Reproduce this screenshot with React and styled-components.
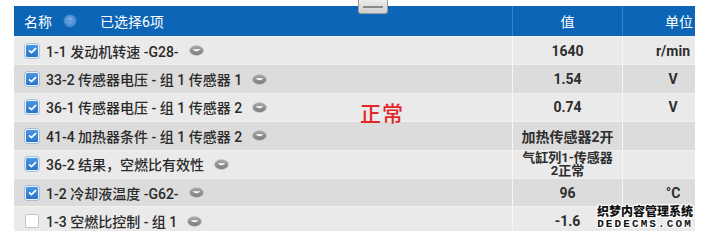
import React from 'react';
import styled, { createGlobalStyle } from 'styled-components';

const GlobalStyle = createGlobalStyle`
  html, body { margin: 0; padding: 0; background: #fff; }
  body { font-family: Roboto, "Noto Sans CJK SC", sans-serif; }
`;

const Page = styled.div`
  position: relative;
  width: 706px;
  height: 239px;
  padding: 6px 0 0 14px;
  box-sizing: border-box;
  overflow: hidden;
`;

const Table = styled.div`
  width: 681px;
  height: 225px;
  overflow: hidden;
`;

const COLS = '498px 110px 101px';

const HeaderRow = styled.div`
  display: grid;
  grid-template-columns: ${COLS};
  width: 709px;
  height: 30px;
  background: #0c65b6;
  color: #fff;
  font-size: 14px;
`;

const HeaderCell = styled.div`
  display: flex;
  align-items: center;
  justify-content: ${p => (p.$center ? 'center' : 'flex-start')};
  padding-left: ${p => p.$pl || 0}px;
  border-left: ${p => (p.$divider ? '1px solid #3b84c9' : 'none')};
`;

const HeaderText = styled.span`
  display: inline-flex;
  margin-left: ${p => p.$ml || 0}px;
`;

const Row = styled.div`
  display: grid;
  grid-template-columns: ${COLS};
  width: 709px;
  height: 28.4px;
  box-sizing: border-box;
  background: ${p => (p.$dark ? '#dcdcdc' : '#eaeaea')};
  border-top: 1px solid #f1f1f1;
  color: #2a2a2a;
`;

const NameCell = styled.div`
  display: flex;
  align-items: center;
  padding-left: 11px;
  font-size: 14px;
  font-weight: 500;
  white-space: nowrap;
`;

const Label = styled.span`
  margin-left: 7px;
  margin-right: 10px;
`;

const ValueCell = styled.div`
  display: flex;
  align-items: center;
  justify-content: center;
  text-align: center;
  font-size: 14px;
  font-weight: 700;
  color: #2e2e2e;
  border-left: 1px solid #f6f6f6;
`;

const TwoLine = styled.span`
  font-size: 13px;
  line-height: 13.5px;
`;

const Box = styled.span`
  width: 14px;
  height: 14px;
  box-sizing: border-box;
  border-radius: 2px;
  flex: none;
  display: inline-flex;
  align-items: center;
  justify-content: center;
  background: ${p => (p.$on ? 'linear-gradient(#4c97e2, #2a74c8)' : '#fff')};
  border: 1px solid ${p => (p.$on ? '#e8f0fa' : '#c4c4c4')};
  box-shadow: ${p => (p.$on ? '0 0 0 0.5px #6c9fd6' : 'none')};
`;

const Handle = styled.div`
  position: absolute;
  left: 358px;
  top: 0;
  width: 30px;
  height: 14px;
  box-sizing: border-box;
  background: linear-gradient(#ececec, #cfcfcf);
  border: 1px solid #9a9a9a;
  border-top: none;
  border-radius: 0 0 3px 3px;
  &::after {
    content: '';
    position: absolute;
    left: 4px;
    right: 4px;
    top: 6px;
    height: 2px;
    background: #8a8a8a;
  }
`;

const Stamp = styled.div`
  position: absolute;
  left: 360px;
  top: 97px;
  font-family: "Noto Sans CJK SC", sans-serif;
  font-size: 21px;
  font-weight: 500;
  color: #e3262a;
  letter-spacing: 1px;
`;

const Watermark = styled.div`
  position: absolute;
  right: 13px;
  top: 203px;
  color: #111;
  font-weight: 700;
  text-align: center;
  text-shadow: 1px 0 #fff, -1px 0 #fff, 0 1px #fff, 0 -1px #fff,
    1px 1px #fff, -1px -1px #fff, 1px -1px #fff, -1px 1px #fff;
`;

const WmTop = styled.div`
  font-family: "Noto Sans CJK SC", sans-serif;
  font-size: 12px;
  font-weight: 900;
  line-height: 15px;
`;

const WmBottom = styled.div`
  font-family: "Liberation Mono", monospace;
  font-size: 11px;
  line-height: 12px;
  letter-spacing: 2.1px;
`;

const Check = ({ on }) => (
  <Box $on={on}>
    {on && (
      <svg width="9" height="7" viewBox="0 0 9 7">
        <path d="M1 3.4 L3.5 5.6 L8 1.2" fill="none" stroke="#fff" strokeWidth="1.7" />
      </svg>
    )}
  </Box>
);

const Drop = () => (
  <svg width="15" height="11" viewBox="0 0 15 11" style={{ flex: 'none' }}>
    <defs>
      <linearGradient id="dg" x1="0" y1="0" x2="0" y2="1">
        <stop offset="0" stopColor="#a8a8a8" />
        <stop offset="1" stopColor="#7c7c7c" />
      </linearGradient>
    </defs>
    <ellipse cx="7.5" cy="5.5" rx="7" ry="5" fill="url(#dg)" stroke="#cfcfcf" strokeWidth="0.6" />
    <path d="M3.6 4.2 Q7.5 8.4 11.4 4.2 Z" fill="#fff" />
  </svg>
);

const Sort = () => (
  <svg width="14" height="14" viewBox="0 0 14 14">
    <defs>
      <radialGradient id="sg" cx="0.5" cy="0.45" r="0.6">
        <stop offset="0" stopColor="#8fbbe9" />
        <stop offset="0.6" stopColor="#4d8fd6" />
        <stop offset="1" stopColor="#2f78c4" />
      </radialGradient>
    </defs>
    <circle cx="7" cy="7" r="6.5" fill="url(#sg)" />
    <rect x="4" y="6.3" width="6" height="1.3" rx="0.6" fill="#3a7fca" opacity="0.7" />
  </svg>
);

const rows = [
  { on: true, label: '1-1 发动机转速 -G28-', value: '1640', unit: 'r/min' },
  { on: true, label: '33-2 传感器电压 - 组 1 传感器 1', value: '1.54', unit: 'V' },
  { on: true, label: '36-1 传感器电压 - 组 1 传感器 2', value: '0.74', unit: 'V' },
  { on: true, label: '41-4 加热器条件 - 组 1 传感器 2', value: '加热传感器2开', unit: '' },
  { on: true, label: '36-2 结果，空燃比有效性', value: ['气缸列1-传感器', '2正常'], unit: '' },
  { on: true, label: '1-2 冷却液温度 -G62-', value: '96', unit: '°C' },
  { on: false, label: '1-3 空燃比控制 - 组 1', value: '-1.6', unit: '' },
];

export default function App() {
  return (
    <>
      <GlobalStyle />
      <Page>
        <Table>
          <HeaderRow>
            <HeaderCell $pl={10}>
              <HeaderText>名称</HeaderText>
              <HeaderText $ml={11}>
                <Sort />
              </HeaderText>
              <HeaderText $ml={23}>已选择6项</HeaderText>
            </HeaderCell>
            <HeaderCell $center $divider>值</HeaderCell>
            <HeaderCell $center $divider $pl={12}>单位</HeaderCell>
          </HeaderRow>
          {rows.map((r, i) => (
            <Row key={i} $dark={i % 2 === 1}>
              <NameCell>
                <Check on={r.on} />
                <Label>{r.label}</Label>
                <Drop />
              </NameCell>
              <ValueCell>
                {Array.isArray(r.value) ? (
                  <TwoLine>
                    {r.value[0]}
                    <br />
                    {r.value[1]}
                  </TwoLine>
                ) : (
                  r.value
                )}
              </ValueCell>
              <ValueCell>{r.unit}</ValueCell>
            </Row>
          ))}
        </Table>
        <Handle />
        <Stamp>正常</Stamp>
        <Watermark>
          <WmTop>织梦内容管理系统</WmTop>
          <WmBottom>DEDECMS.COM</WmBottom>
        </Watermark>
      </Page>
    </>
  );
}
